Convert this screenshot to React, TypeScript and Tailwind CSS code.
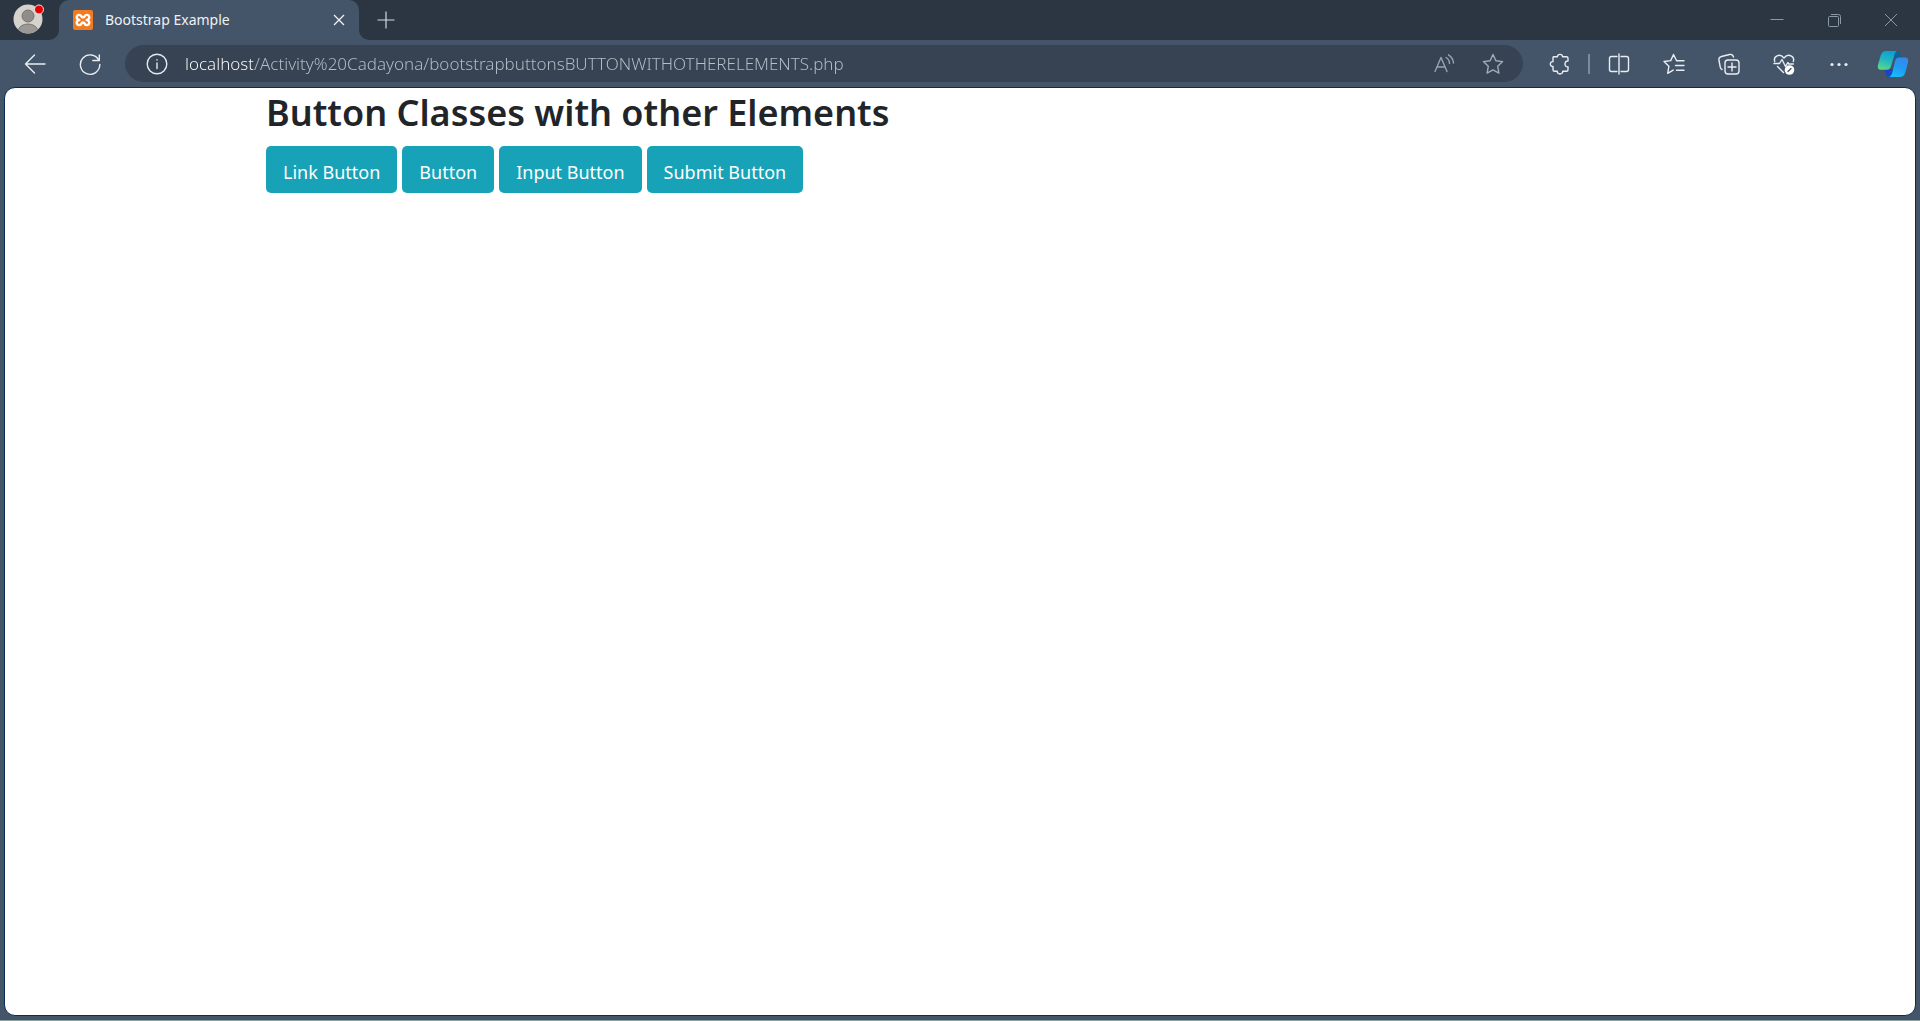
import React from "react";

type IconProps = { children: React.ReactNode; className?: string };

function Icon({ children, className = "" }: IconProps) {
  return (
    <svg
      viewBox="0 0 24 24"
      className={`size-6 shrink-0 ${className}`}
      fill="none"
      stroke="currentColor"
      strokeWidth="1.4"
      strokeLinecap="round"
      strokeLinejoin="round"
      aria-hidden="true"
    >
      {children}
    </svg>
  );
}

function ToolButton({ label, children, className = "w-[55px]" }: { label: string; children: React.ReactNode; className?: string }) {
  return (
    <button type="button" aria-label={label} className={`flex h-full items-center justify-center ${className}`}>
      {children}
    </button>
  );
}

function Avatar() {
  return (
    <svg viewBox="0 0 32 32" className="size-8" aria-hidden="true">
      <defs>
        <clipPath id="face">
          <circle cx="15" cy="17" r="14.5" />
        </clipPath>
      </defs>
      <circle cx="15" cy="17" r="14.5" fill="#d6d3ce" />
      <g clipPath="url(#face)">
        <circle cx="15" cy="14" r="6" fill="#8f8c89" stroke="#77736f" strokeWidth="1" />
        <ellipse cx="15" cy="28.500" rx="9.500" ry="6.500" fill="#9b9895" stroke="#77736f" strokeWidth="1" />
      </g>
      <circle cx="26" cy="7.500" r="4.500" fill="#e60000" stroke="#f3e9e9" strokeWidth="1" />
    </svg>
  );
}

function Favicon() {
  return (
    <svg viewBox="0 0 20 20" className="size-5 shrink-0" aria-hidden="true">
      <rect width="20" height="20" rx="2" fill="#f37a1f" />
      <path
        d="M6.300 10C4 9.500 3.500 8 3.800 6.700C4.300 4.500 7.200 4.300 8.300 6.200Q8.700 7.500 10 7.500Q11.300 7.500 11.700 6.200C12.800 4.300 15.700 4.500 16.200 6.700C16.500 8 16 9.500 13.700 10C16 10.500 16.500 12 16.200 13.300C15.700 15.500 12.800 15.700 11.700 13.800Q11.300 12.500 10 12.500Q8.700 12.500 8.300 13.800C7.200 15.700 4.300 15.500 3.800 13.300C3.500 12 4 10.500 6.300 10Z"
        fill="none"
        stroke="#fff"
        strokeWidth="2.400"
        strokeLinejoin="round"
      />
    </svg>
  );
}

function Copilot() {
  return (
    <svg viewBox="0 0 32 28" className="h-7 w-8" aria-hidden="true">
      <defs>
        <linearGradient id="cpLeft" x1="0.600" y1="0" x2="0.300" y2="1">
          <stop offset="0" stopColor="#0b9fd6" />
          <stop offset="0.500" stopColor="#22b8c0" />
          <stop offset="1" stopColor="#5fd68a" />
        </linearGradient>
        <linearGradient id="cpRight" x1="0.700" y1="0" x2="0.300" y2="1">
          <stop offset="0" stopColor="#3a86e8" />
          <stop offset="0.500" stopColor="#1f9bf5" />
          <stop offset="1" stopColor="#18bdf7" />
        </linearGradient>
      </defs>
      <path d="M16 1h4c2.500 0 3.200 2 4.200 6.500L19 9l-4-3z" fill="#0d6394" />
      <path d="M7.500 19h9l-1.500 8h-3c-3 0-3.500-3-4.500-8z" fill="#1746c9" />
      <path d="M9.500 1H20c-1.600.8-2.200 2.500-2.900 5l-3.200 10.500c-.7 2.200-1.900 3.300-4.100 3.300H4c-2.800 0-3.800-2-3-5L3.700 5.500C4.700 2.300 6.500 1 9.500 1z" fill="url(#cpLeft)" />
      <path d="M22 7.500H28c2.800 0 3.800 2 3 5l-2.700 10C27.400 25.700 25.600 27 22.600 27H12c2-.8 2.700-2.500 3.400-5l2.600-10.500c.7-2.600 1.800-4 4-4z" fill="url(#cpRight)" />
    </svg>
  );
}

function TitleBar() {
  return (
    <header className="flex h-10 bg-[#455569]">
      <button type="button" aria-label="Profile" className="flex w-[59px] items-center rounded-br-[10px] bg-[#2b3642] pb-1 pl-[13px]">
        <Avatar />
      </button>
      <div className="flex min-w-0 flex-1 bg-[#2b3642]">
        <div className="flex w-[300px] shrink-0 items-center rounded-t-[10px] bg-[#455569] pr-[14px] pl-[14px]">
          <Favicon />
          <span className="ml-3 flex-1 text-[14px] leading-5 text-[#eef1f4]">Bootstrap Example</span>
          <button type="button" aria-label="Close tab" className="text-[#f0f3f6]">
            <svg viewBox="0 0 12 12" className="size-3" stroke="currentColor" strokeWidth="1.300" aria-hidden="true">
              <path d="M1 1l10 10M11 1L1 11" />
            </svg>
          </button>
        </div>
        <div className="flex flex-1 bg-[#455569]">
          <div className="flex flex-1 rounded-bl-[10px] bg-[#2b3642]">
            <button type="button" aria-label="New tab" className="flex w-[54px] items-center justify-center text-[#d5dae0]">
              <svg viewBox="0 0 18 18" className="size-[18px]" stroke="currentColor" strokeWidth="1.200" aria-hidden="true">
                <path d="M9 .500v17M.500 9h17" />
              </svg>
            </button>
          </div>
        </div>
        <div className="flex pr-px text-[#8b98a8]">
          <ToolButton label="Minimize" className="w-[57px]">
            <svg viewBox="0 0 14 14" className="size-[14px]" stroke="currentColor" aria-hidden="true">
              <path d="M.500 6.500h13" />
            </svg>
          </ToolButton>
          <ToolButton label="Restore" className="w-[57px]">
            <svg viewBox="0 0 14 14" className="size-[14px]" fill="none" stroke="currentColor" aria-hidden="true">
              <rect x="1.500" y="3.500" width="10" height="10" rx="1" />
              <path d="M4 1.500h7.500a2 2 0 0 1 2 2V11" />
            </svg>
          </ToolButton>
          <ToolButton label="Close" className="w-[57px]">
            <svg viewBox="0 0 14 14" className="size-[14px]" stroke="currentColor" aria-hidden="true">
              <path d="M1 1l12 12M13 1L1 13" />
            </svg>
          </ToolButton>
        </div>
      </div>
    </header>
  );
}

function AddressBar() {
  return (
    <div className="flex h-[37px] min-w-0 flex-1 items-center rounded-full bg-[#374353] pr-[6px] pl-5">
      <button type="button" aria-label="Site information" className="text-[#e6eaee]">
        <Icon>
          <circle cx="12" cy="12" r="9.800" />
          <path d="M12 11v5.500M12 7.800v.200" />
        </Icon>
      </button>
      <input
        type="text"
        aria-label="Address"
        readOnly
        value="localhost/Activity%20Cadayona/bootstrapbuttonsBUTTONWITHOTHERELEMENTS.php"
        className="ml-4 min-w-0 flex-1 bg-[linear-gradient(to_right,#ffffff_68px,#b7bec8_68px)] bg-clip-text text-[17px] leading-6 font-light text-transparent outline-none"
      />
      <ToolButton label="Read aloud" className="w-[49px] text-[#9aa3ae]">
        <Icon>
          <path d="M3 19.500L9 5.500l6 14M5 15h8M14 5.500a7 7 0 0 1 3.500 6M16.500 2.800a10.500 10.500 0 0 1 5 8.200" />
        </Icon>
      </ToolButton>
      <ToolButton label="Add to favorites" className="w-[49px] text-[#a3abb5]">
        <Icon>
          <path d="M12 2.500l2.900 6.200 6.700.9-4.900 4.700 1.200 6.800L12 17.900l-5.900 3.200 1.200-6.800L2.400 9.600l6.700-.9z" />
        </Icon>
      </ToolButton>
    </div>
  );
}

function Toolbar() {
  return (
    <nav aria-label="Browser toolbar" className="flex h-[47px] items-center bg-[#455569] pl-[7px] text-[#e9edf1]">
      <ToolButton label="Back">
        <Icon>
          <path d="M22 12H2.500M11.500 3l-9 9 9 9" />
        </Icon>
      </ToolButton>
      <ToolButton label="Refresh">
        <Icon>
          <path d="M20.800 8.300A9.700 9.700 0 1 0 21.800 12.500M21.300 3v5.500h-6.500" />
        </Icon>
      </ToolButton>
      <div className="ml-2 flex min-w-0 flex-1">
        <AddressBar />
      </div>
      <ToolButton label="Extensions" className="ml-[9px] w-[55px]">
        <Icon>
          <path d="M5.500 4.800H9.500C8.700 1.500 15.300 1.500 14.500 4.800H18.500Q20 4.800 20 6.300V9C16 8.300 16 15.500 20 14.800V17.800Q20 19.300 18.500 19.300H14.700C15.300 22.800 8.700 22.800 9.300 19.300H6.500Q5 19.300 5 17.800V14.500C1.500 15 1.500 9.200 5 9.600V5.800Q5 4.800 5.500 4.800Z" />
        </Icon>
      </ToolButton>
      <div className="ml-px h-5 w-[2px] bg-[#7d8a9b]" />
      <ToolButton label="Split screen" className="ml-px w-[55px]">
        <Icon>
          <path d="M10 4.500H4.500a2 2 0 0 0-2 2v11a2 2 0 0 0 2 2H10M14 4.500h5.500a2 2 0 0 1 2 2v11a2 2 0 0 1-2 2H14M12 2v20" />
        </Icon>
      </ToolButton>
      <ToolButton label="Favorites">
        <Icon>
          <path d="M14.500 8.500L11.500 2.500 8.700 8.600 2 9.500l4.900 4.700-1.200 7.100 5.500-3.200M14.500 8.700h7.500M13.500 13.500h8.500M14.500 18.300h7.500" />
        </Icon>
      </ToolButton>
      <ToolButton label="Collections">
        <Icon>
          <rect x="8" y="8" width="14" height="14" rx="3" />
          <path d="M15 11v8M11 15h8M5 17.500C4 17 3.600 16.500 3.300 15.300L2 8.500C1.600 6.500 2.500 5 4.500 4.500L12.500 2.500C14.500 2 16 3 16.500 5" />
        </Icon>
      </ToolButton>
      <ToolButton label="Browser essentials">
        <Icon>
          <path d="M2.700 9.500C1.200 4.500 7.500.5 12 6c4.500-5.500 11-1.500 9.300 3.500M5.500 14.500L11.500 20.500M2 11.500h5.500L10 7.500l3.500 7 2.300-4 1 1.500h4.500" />
          <circle cx="17.500" cy="18" r="4.800" fill="#ffffff" stroke="none" />
          <path d="M16 19.500l3-3" stroke="#455569" />
        </Icon>
      </ToolButton>
      <ToolButton label="Settings and more">
        <Icon>
          <g fill="currentColor" stroke="none">
            <circle cx="5" cy="12.500" r="1.600" />
            <circle cx="12" cy="12.500" r="1.600" />
            <circle cx="19" cy="12.500" r="1.600" />
          </g>
        </Icon>
      </ToolButton>
      <ToolButton label="Copilot" className="w-[54px]">
        <Copilot />
      </ToolButton>
    </nav>
  );
}

const buttonClass =
  "h-[47px] rounded-[5px] bg-[#17a2b8] px-[17px] pt-[6px] text-center text-[18px] leading-[41px] text-white";

export default function App() {
  return (
    <div className="flex min-h-screen flex-col border-b border-[#8ba39b] bg-[#455569] font-['Noto_Sans','Open_Sans',sans-serif]">
      <TitleBar />
      <Toolbar />
      <main className="mx-1 mb-1 flex-1 rounded-[11px] border border-[#0c2d52] bg-white">
        <div className="mx-auto max-w-[1426px] px-[19px]">
          <h1 className="mb-[10px] pt-[2px] text-[36px] leading-[46px] font-semibold text-[#212529]">Button Classes with other Elements</h1>
          <form className="flex flex-wrap gap-[5px]" onSubmit={(e) => e.preventDefault()}>
            <a href="#" role="button" className={buttonClass}>
              Link Button
            </a>
            <button type="button" className={buttonClass}>
              Button
            </button>
            <input type="button" value="Input Button" className={buttonClass} />
            <input type="submit" value="Submit Button" className={buttonClass} />
          </form>
        </div>
      </main>
    </div>
  );
}
